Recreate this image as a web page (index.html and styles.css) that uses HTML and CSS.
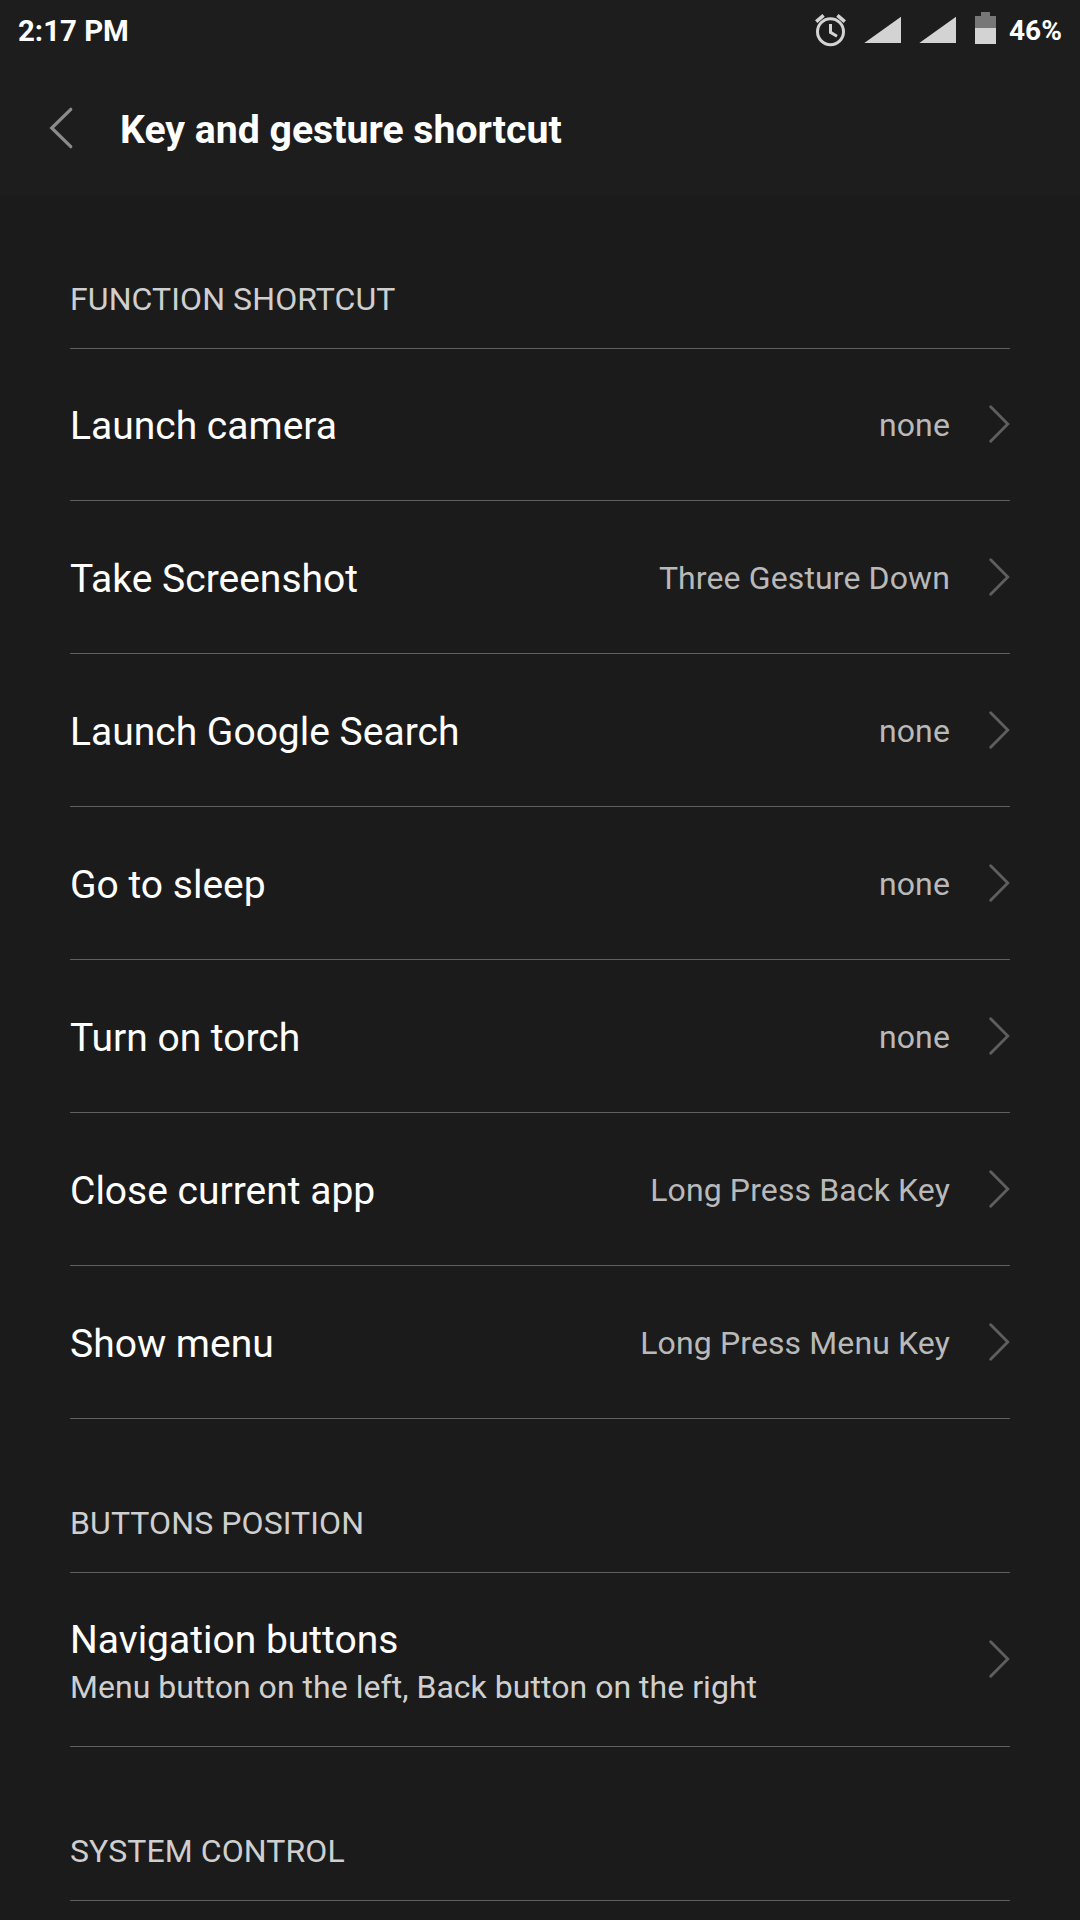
FILE: index.html
```
<!DOCTYPE html>
<html>
	<head>
		<meta charset="utf-8">
		<title>Key and gesture shortcut</title>
		<link rel="stylesheet" href="styles.css">
	</head>
	<body>
		<svg class="defs">
			<symbol id="arrow" viewBox="0 0 21 40">
				<path d="M1.7 2.8L18.8 20L1.7 37.2" />
			</symbol>
		</svg>
		<div class="top">
			<div class="status">
				<span class="time">2:17 PM</span>
				<svg class="icons" width="184" height="40" viewBox="0 0 184 40">
					<!-- alarm -->
					<g class="alarm">
						<circle cx="18.5" cy="23.7" r="13" />
						<path d="M18.5 16V24.4L25 28.2" />
						<path class="bells" d="M4.2 13.6L11.6 7.4M32.8 13.6L25.4 7.4" />
					</g>
					<!-- signal, both sims -->
					<path class="on" d="M52.3 35H89V8.7ZM107.3 35H144V8.7Z" />
					<!-- battery -->
					<path class="off" d="M163 20V8H169V4H178V8H184V20Z" />
					<path class="on" d="M163 20H184V36H163Z" />
				</svg>
				<span class="percent">46%</span>
			</div>
			<div class="bar">
				<svg class="back" width="25" height="42" viewBox="0 0 25 42"><path d="M21.8 2.3L2.7 21L21.8 39.7" /></svg>
				<h1>Key and gesture shortcut</h1>
			</div>
		</div>
		<div class="list">
			<h2>FUNCTION SHORTCUT</h2>
			<div class="row"><span class="name">Launch camera</span><span class="value">none</span><svg class="arrow"><use href="#arrow" /></svg></div>
			<div class="row"><span class="name">Take Screenshot</span><span class="value">Three Gesture Down</span><svg class="arrow"><use href="#arrow" /></svg></div>
			<div class="row"><span class="name">Launch Google Search</span><span class="value">none</span><svg class="arrow"><use href="#arrow" /></svg></div>
			<div class="row"><span class="name">Go to sleep</span><span class="value">none</span><svg class="arrow"><use href="#arrow" /></svg></div>
			<div class="row"><span class="name">Turn on torch</span><span class="value">none</span><svg class="arrow"><use href="#arrow" /></svg></div>
			<div class="row"><span class="name">Close current app</span><span class="value">Long Press Back Key</span><svg class="arrow"><use href="#arrow" /></svg></div>
			<div class="row"><span class="name">Show menu</span><span class="value">Long Press Menu Key</span><svg class="arrow"><use href="#arrow" /></svg></div>
			<h2>BUTTONS POSITION</h2>
			<div class="row tall">
				<div class="name">Navigation buttons<p>Menu button on the left, Back button on the right</p></div>
				<svg class="arrow"><use href="#arrow" /></svg>
			</div>
			<h2>SYSTEM CONTROL</h2>
		</div>
	</body>
</html>
```

FILE: styles.css
```
*{
	box-sizing:border-box;
}
body{
	margin:0;
	height:1920px;
	overflow:hidden;
	background:#1b1b1b;
	color:#fff;
	font-family:Roboto,sans-serif;
}
.defs{
	display:none;
}
.top{
	height:195px;
	background:#1d1d1d;
}
.status{
	display:flex;
	height:60px;
	padding:0 18px;
	font-size:29.4px;
	font-weight:bold;
	line-height:62px;
}
.time{
	flex:1;
}
.icons{
	margin:8px 13px 0 0;
}
.percent{
	width:53px;
	font-size:28px;
	white-space:nowrap;
}
.on{
	fill:#d3d3d3;
}
.off{
	fill:#777;
}
.alarm{
	fill:none;
	stroke:#d3d3d3;
	stroke-width:3;
}
.bells{
	stroke-width:3.6;
}
.bar{
	display:flex;
	align-items:center;
	height:136px;
	padding-left:49px;
}
.back{
	fill:none;
	stroke:#8b8b8b;
	stroke-width:3.2;
	stroke-linecap:round;
}
h1{
	margin:4px 0 0 46px;
	font-size:39.2px;
	line-height:50px;
}
.list{
	padding:1px 70px 0;
}
h2{
	margin:0;
	height:153px;
	padding-top:83px;
	border-bottom:1px solid #5f5f5f;
	color:#cfcfcf;
	font-size:32px;
	font-weight:normal;
	letter-spacing:.1px;
	line-height:40px;
}
.row{
	display:flex;
	align-items:center;
	height:153px;
	border-bottom:1px solid #5f5f5f;
}
h2 + .row{
	margin-top:-1px;
}
.row + h2{
	height:154px;
	padding-top:84px;
}
.name{
	flex:1;
	padding-top:4px;
	font-size:39px;
	line-height:48px;
}
.value{
	margin-right:39px;
	padding-top:2px;
	color:#b9b9b9;
	font-size:32px;
	letter-spacing:.12px;
}
.arrow{
	width:21px;
	height:40px;
	margin-top:-1px;
	fill:none;
	stroke:#5f5f5f;
	stroke-width:2.8;
	stroke-linecap:round;
}
.row.tall{
	height:175px;
}
.tall p{
	margin:3px 0 0;
	color:#cfcfcf;
	font-size:32px;
	letter-spacing:.03px;
	line-height:40px;
}
```
